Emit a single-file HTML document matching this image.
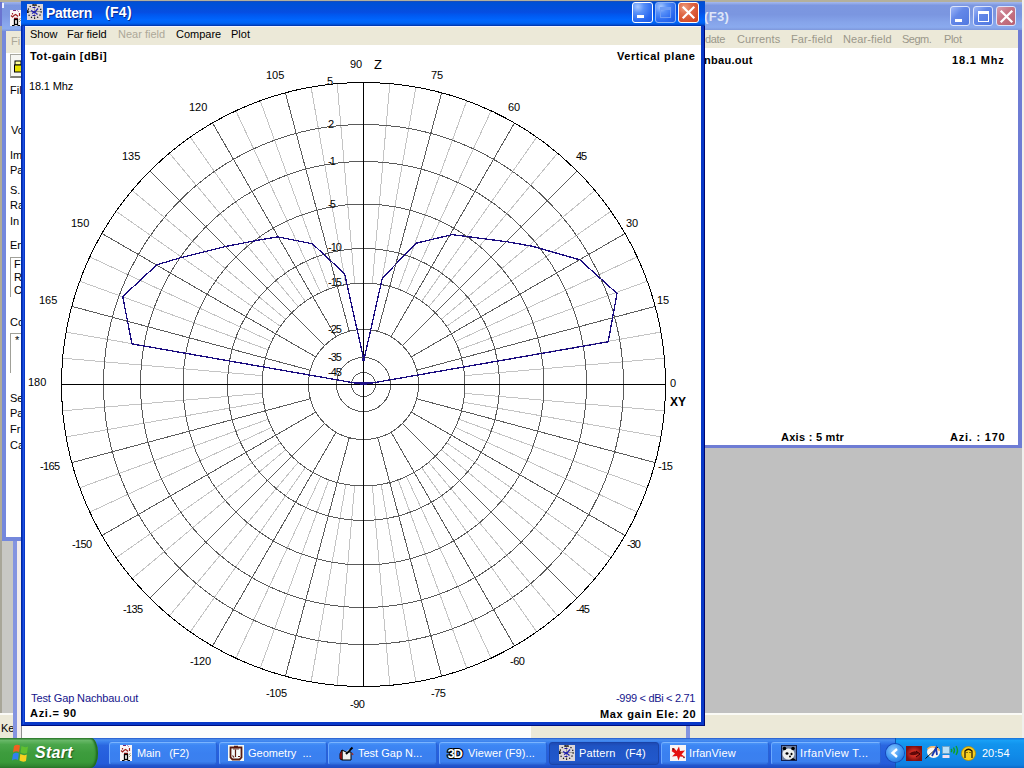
<!DOCTYPE html>
<html><head><meta charset="utf-8">
<style>
*{margin:0;padding:0;box-sizing:border-box}
html,body{width:1024px;height:768px;overflow:hidden;background:#c0c0c0;font-family:"Liberation Sans",sans-serif;position:relative}
.a{position:absolute}
.t{position:absolute;white-space:pre;font-family:"Liberation Sans",sans-serif;-webkit-font-smoothing:antialiased}
svg{position:absolute;overflow:visible}
</style></head><body>
<div class="a" style="left:0;top:0;width:1024px;height:2px;background:#b4b09c"></div>
<div class="a" style="left:0;top:26px;width:2px;height:514px;background:#b0ac98"></div>
<div class="a" style="left:0;top:2px;width:2px;height:24px;background:#6a74d0"></div><div class="a" style="left:2px;top:3px;width:2px;height:4px;background:#f4f8ff"></div>
<div class="a" style="left:0;top:540px;width:2px;height:175px;background:#a8a698"></div>
<div class="a" style="left:2px;top:541px;width:11px;height:172px;background:#c8c8c4"></div>
<div class="a" style="left:0;top:713px;width:1024px;height:2px;background:#fafaf6"></div>
<div class="a" style="left:0;top:715px;width:1024px;height:23px;background:#ece9d8"></div>
<div class="a" style="left:1022px;top:0;width:2px;height:738px;background:#f0f0ec"></div>
<div class="t" style="left:1px;top:723px;font-size:11px;line-height:11px;color:#000">Ke</div>
<div class="a" style="left:13px;top:541px;width:4px;height:197px;background:#8494e0"></div>
<div class="a" style="left:17px;top:541px;width:5px;height:197px;background:#f2ecec"></div>
<div class="a" style="left:21px;top:726px;width:1px;height:12px;background:#909090"></div>
<div class="a" style="left:22px;top:726px;width:509px;height:12px;background:#fcfcfc"></div>
<div class="a" style="left:686px;top:726px;width:4px;height:12px;background:#8494e0"></div>
<div class="a" style="left:2px;top:2px;width:20px;height:539px;background:#7488dc"></div>
<div class="a" style="left:2px;top:2px;width:20px;height:29px;background:linear-gradient(180deg,#a0b4ec 0,#7b96df 12%,#7d98e2 45%,#88a6ec 75%,#8cacee 92%,#7a94dc 100%)"></div>
<div class="a" style="left:6px;top:31px;width:16px;height:22px;background:#ece9d8"></div>
<div class="a" style="left:6px;top:53px;width:16px;height:484px;background:#fff"></div>
<div class="a" style="left:10px;top:54px;width:12px;height:24px;border:1px solid #a8a8a0;border-right:none;border-bottom:2px solid #808078;background:#f6f6f2"></div>
<svg class="a" style="left:14px;top:60px" width="8" height="13"><rect x="1" y="1" width="6" height="4" fill="#ffff9a" stroke="#000"/><rect x="0.5" y="5" width="7" height="7" fill="#e8e000" stroke="#000"/></svg>
<div class="a" style="left:8px;top:10px"><svg width="16" height="16" viewBox="0 0 16 16"><rect x="2" y="0" width="12" height="16" fill="#fbf6f6"/>
<path d="M5 0.5H8M9.5 0.5L10.5 1.5" stroke="#7a2a7a" stroke-width="1"/>
<path d="M4.5 3V4.5M11.5 3V6M3 5.5L4.5 7L6 5.5L7.5 4.5L9 5.5L10 6.5" stroke="#a02020" stroke-width="1.2" fill="none"/>
<path d="M6 8.5H10" stroke="#8a1010" stroke-width="1.5"/><rect x="6.5" y="9.5" width="3" height="5" fill="none" stroke="#000" stroke-width="1.3"/>
<path d="M4 15.5H6.5M9.5 15.5H12" stroke="#000" stroke-width="1"/><path d="M11 10L12.5 8M11 12L13 10" stroke="#8a8a60" stroke-width="0.8"/></svg></div>
<div class="a" style="left:10px;top:257px;width:12px;height:40px;border-left:1px solid #a0a098;border-top:1px solid #a0a098"></div>
<div class="a" style="left:10px;top:333px;width:12px;height:40px;border-left:1px solid #a0a098;border-top:1px solid #a0a098"></div>
<div class="t" style="left:11px;top:36px;font-size:11px;line-height:11px;color:#aca899">Fi</div>
<div class="t" style="left:10px;top:85px;font-size:11px;line-height:11px;color:#000">Fil</div>
<div class="t" style="left:11px;top:125px;font-size:11px;line-height:11px;color:#000">Vo</div>
<div class="t" style="left:10px;top:150px;font-size:11px;line-height:11px;color:#000">Im</div>
<div class="t" style="left:10px;top:165px;font-size:11px;line-height:11px;color:#000">Pa</div>
<div class="t" style="left:10px;top:185px;font-size:11px;line-height:11px;color:#000">S.1</div>
<div class="t" style="left:10px;top:200px;font-size:11px;line-height:11px;color:#000">Ra</div>
<div class="t" style="left:10px;top:216px;font-size:11px;line-height:11px;color:#000">In</div>
<div class="t" style="left:10px;top:240px;font-size:11px;line-height:11px;color:#000">En</div>
<div class="t" style="left:10px;top:317px;font-size:11px;line-height:11px;color:#000">Co</div>
<div class="t" style="left:10px;top:393px;font-size:11px;line-height:11px;color:#000">Se</div>
<div class="t" style="left:10px;top:408px;font-size:11px;line-height:11px;color:#000">Pa</div>
<div class="t" style="left:10px;top:424px;font-size:11px;line-height:11px;color:#000">Fr</div>
<div class="t" style="left:10px;top:440px;font-size:11px;line-height:11px;color:#000">Ca</div>
<div class="t" style="left:14px;top:259px;font-size:11px;line-height:11px;color:#000">F</div>
<div class="t" style="left:14px;top:272px;font-size:11px;line-height:11px;color:#000">R</div>
<div class="t" style="left:14px;top:285px;font-size:11px;line-height:11px;color:#000">C</div>
<div class="t" style="left:15px;top:335px;font-size:11px;line-height:11px;color:#000">*</div>
<div class="a" style="left:2px;top:3px;width:2px;height:5px;background:#eef2ff"></div>
<div class="a" style="left:700px;top:2px;width:322px;height:446px;background:#6e7cd4"></div>
<div class="a" style="left:700px;top:2px;width:322px;height:28px;background:linear-gradient(180deg,#a6baee 0,#7c97e0 12%,#7b96e0 45%,#86a4ea 72%,#8aaaee 90%,#7e98dc 100%)"></div>
<div class="a" style="left:700px;top:30px;width:318px;height:18px;background:#ece9d8"></div>
<div class="a" style="left:700px;top:48px;width:318px;height:397px;background:#fff"></div>
<div class="a" style="left:950px;top:6px;width:20px;height:20px;border:1px solid #dce4fa;border-radius:3px;background:linear-gradient(135deg,#a0b8f8 0,#6488e8 40%,#5078e0 100%)"></div><div class="a" style="left:955px;top:19px;width:7px;height:3px;background:#fff"></div>
<div class="a" style="left:973px;top:6px;width:20px;height:20px;border:1px solid #dce4fa;border-radius:3px;background:linear-gradient(135deg,#a0b8f8 0,#6488e8 40%,#5078e0 100%)"></div><div class="a" style="left:978px;top:11px;width:11px;height:11px;border:1px solid #fff;border-top-width:3px"></div>
<div class="a" style="left:996px;top:6px;width:20px;height:20px;border:1px solid #dce4fa;border-radius:3px;background:linear-gradient(135deg,#d8a0b0 0,#c87888 40%,#b86070 100%)"></div><svg class="a" style="left:996px;top:6px" width="20" height="20"><path d="M5.5 5.5 L15.5 15.5 M15.5 5.5 L5.5 15.5" stroke="#fff" stroke-width="2.2" stroke-linecap="square"/></svg>
<div class="t" style="left:704px;top:10px;font-size:13px;line-height:13px;color:#dfe6f8;font-weight:bold;letter-spacing:0.33px">(F3)</div>
<div class="t" style="left:705px;top:34px;font-size:11px;line-height:11px;color:#9a978a;letter-spacing:-0.33px">date</div>
<div class="t" style="left:737px;top:34px;font-size:11px;line-height:11px;color:#9a978a;letter-spacing:0.14px">Currents</div>
<div class="t" style="left:791px;top:34px;font-size:11px;line-height:11px;color:#9a978a;letter-spacing:0.12px">Far-field</div>
<div class="t" style="left:843px;top:34px;font-size:11px;line-height:11px;color:#9a978a;letter-spacing:0.11px">Near-field</div>
<div class="t" style="left:902px;top:34px;font-size:11px;line-height:11px;color:#9a978a;letter-spacing:-0.5px">Segm.</div>
<div class="t" style="left:944px;top:34px;font-size:11px;line-height:11px;color:#9a978a;letter-spacing:-0.33px">Plot</div>
<div class="t" style="left:704px;top:55px;font-size:11px;line-height:11px;color:#000;font-weight:bold;letter-spacing:0.29px">nbau.out</div>
<div class="t" style="left:952px;top:55px;font-size:11px;line-height:11px;color:#000;font-weight:bold;letter-spacing:0.86px">18.1 Mhz</div>
<div class="t" style="left:781px;top:432px;font-size:11px;line-height:11px;color:#000;font-weight:bold;letter-spacing:0.27px">Axis : 5 mtr</div>
<div class="t" style="left:950px;top:432px;font-size:11px;line-height:11px;color:#000;font-weight:bold;letter-spacing:0.78px">Azi. : 170</div>
<div class="a" style="left:21px;top:1px;width:684px;height:725px;background:#0838c8;border-left:1px solid #0028a0;border-right:1px solid #000870;border-bottom:1px solid #001080"></div><div class="a" style="left:23px;top:26px;width:1px;height:698px;background:#2050e0"></div>
<div class="a" style="left:21px;top:1px;width:684px;height:25px;background:linear-gradient(180deg,#2a4ca8 0,#0050d4 5%,#0050d8 16%,#064ee2 45%,#0058f0 56%,#0066fe 76%,#0064f4 88%,#0050d8 94%,#0030a0 100%)"></div>
<div class="a" style="left:25px;top:26px;width:676px;height:1px;background:#f4f4ff"></div>
<div class="a" style="left:25px;top:27px;width:676px;height:18px;background:#ece9d8"></div>
<div class="a" style="left:25px;top:45px;width:676px;height:677px;background:#fff"></div>
<div class="a" style="left:27px;top:4px"><svg width="16" height="16" viewBox="0 0 16 16"><rect width="16" height="16" fill="#dcd6d8"/>
<path d="M1 7.5H15M7.5 1V15" stroke="#8a8a80" stroke-width="0.8"/>
<circle cx="7.5" cy="7.5" r="6.6" fill="none" stroke="#000" stroke-width="1.2" stroke-dasharray="1.2 2"/>
<path d="M5.5 1H9.5" stroke="#000" stroke-width="1.2"/><path d="M0.8 6V9" stroke="#000" stroke-width="1.2"/>
<path d="M5.5 3.5H8.5M5.5 11.5H8.5" stroke="#2018a0" stroke-width="1.2"/>
<path d="M4 6.5L7.5 8.5L11 4.5M5 9.5L7.5 8L10.5 10.5" stroke="#2020b0" stroke-width="1.3" fill="none"/></svg></div>
<div class="a" style="left:632px;top:2px;width:21px;height:21px;border:1px solid #fff;border-radius:3px;background:radial-gradient(circle at 25% 20%, #a8c8ff 0, #5890f8 30%, #2868f0 70%, #1e58e0 100%)"></div><div class="a" style="left:637px;top:15px;width:7px;height:3px;background:#fff"></div>
<div class="a" style="left:655px;top:2px;width:21px;height:21px;border:1px solid #8cb4f8;border-radius:3px;background:radial-gradient(circle at 25% 20%, #a8c8ff 0, #5890f8 30%, #2868f0 70%, #1e58e0 100%)"></div><div class="a" style="left:660px;top:7px;width:11px;height:11px;border:1px solid #6e9cf6;border-top-width:3px"></div>
<div class="a" style="left:678px;top:2px;width:21px;height:21px;border:1px solid #fff;border-radius:3px;background:radial-gradient(circle at 30% 25%, #f0a080 0, #e06a48 35%, #d44a26 80%, #c83c18 100%)"></div><svg class="a" style="left:678px;top:2px" width="21" height="21"><path d="M5.5 5.5 L15.5 15.5 M15.5 5.5 L5.5 15.5" stroke="#fff" stroke-width="2.2" stroke-linecap="square"/></svg>
<svg class="a" style="left:0;top:0" width="1024" height="768" shape-rendering="crispEdges"><line x1="464.61" y1="375.65" x2="664.35" y2="358.18" stroke="#c4c4c4"/>
<line x1="463.46" y1="366.87" x2="660.91" y2="332.06" stroke="#c4c4c4"/>
<line x1="458.88" y1="349.78" x2="647.29" y2="281.21" stroke="#c4c4c4"/>
<line x1="455.49" y1="341.60" x2="637.20" y2="256.87" stroke="#c4c4c4"/>
<line x1="446.64" y1="326.28" x2="610.88" y2="211.28" stroke="#c4c4c4"/>
<line x1="441.25" y1="319.26" x2="594.85" y2="190.38" stroke="#c4c4c4"/>
<line x1="428.74" y1="306.75" x2="557.62" y2="153.15" stroke="#c4c4c4"/>
<line x1="421.72" y1="301.36" x2="536.72" y2="137.12" stroke="#c4c4c4"/>
<line x1="406.40" y1="292.51" x2="491.13" y2="110.80" stroke="#c4c4c4"/>
<line x1="398.22" y1="289.12" x2="466.79" y2="100.71" stroke="#c4c4c4"/>
<line x1="381.13" y1="284.54" x2="415.94" y2="87.09" stroke="#c4c4c4"/>
<line x1="372.35" y1="283.39" x2="389.82" y2="83.65" stroke="#c4c4c4"/>
<line x1="354.65" y1="283.39" x2="337.18" y2="83.65" stroke="#c4c4c4"/>
<line x1="345.87" y1="284.54" x2="311.06" y2="87.09" stroke="#c4c4c4"/>
<line x1="328.78" y1="289.12" x2="260.21" y2="100.71" stroke="#c4c4c4"/>
<line x1="320.60" y1="292.51" x2="235.87" y2="110.80" stroke="#c4c4c4"/>
<line x1="305.28" y1="301.36" x2="190.28" y2="137.12" stroke="#c4c4c4"/>
<line x1="298.26" y1="306.75" x2="169.38" y2="153.15" stroke="#c4c4c4"/>
<line x1="285.75" y1="319.26" x2="132.15" y2="190.38" stroke="#c4c4c4"/>
<line x1="280.36" y1="326.28" x2="116.12" y2="211.28" stroke="#c4c4c4"/>
<line x1="271.51" y1="341.60" x2="89.80" y2="256.87" stroke="#c4c4c4"/>
<line x1="268.12" y1="349.78" x2="79.71" y2="281.21" stroke="#c4c4c4"/>
<line x1="263.54" y1="366.87" x2="66.09" y2="332.06" stroke="#c4c4c4"/>
<line x1="262.39" y1="375.65" x2="62.65" y2="358.18" stroke="#c4c4c4"/>
<line x1="262.39" y1="393.35" x2="62.65" y2="410.82" stroke="#c4c4c4"/>
<line x1="263.54" y1="402.13" x2="66.09" y2="436.94" stroke="#c4c4c4"/>
<line x1="268.12" y1="419.22" x2="79.71" y2="487.79" stroke="#c4c4c4"/>
<line x1="271.51" y1="427.40" x2="89.80" y2="512.13" stroke="#c4c4c4"/>
<line x1="280.36" y1="442.72" x2="116.12" y2="557.72" stroke="#c4c4c4"/>
<line x1="285.75" y1="449.74" x2="132.15" y2="578.62" stroke="#c4c4c4"/>
<line x1="298.26" y1="462.25" x2="169.38" y2="615.85" stroke="#c4c4c4"/>
<line x1="305.28" y1="467.64" x2="190.28" y2="631.88" stroke="#c4c4c4"/>
<line x1="320.60" y1="476.49" x2="235.87" y2="658.20" stroke="#c4c4c4"/>
<line x1="328.78" y1="479.88" x2="260.21" y2="668.29" stroke="#c4c4c4"/>
<line x1="345.87" y1="484.46" x2="311.06" y2="681.91" stroke="#c4c4c4"/>
<line x1="354.65" y1="485.61" x2="337.18" y2="685.35" stroke="#c4c4c4"/>
<line x1="372.35" y1="485.61" x2="389.82" y2="685.35" stroke="#c4c4c4"/>
<line x1="381.13" y1="484.46" x2="415.94" y2="681.91" stroke="#c4c4c4"/>
<line x1="398.22" y1="479.88" x2="466.79" y2="668.29" stroke="#c4c4c4"/>
<line x1="406.40" y1="476.49" x2="491.13" y2="658.20" stroke="#c4c4c4"/>
<line x1="421.72" y1="467.64" x2="536.72" y2="631.88" stroke="#c4c4c4"/>
<line x1="428.74" y1="462.25" x2="557.62" y2="615.85" stroke="#c4c4c4"/>
<line x1="441.25" y1="449.74" x2="594.85" y2="578.62" stroke="#c4c4c4"/>
<line x1="446.64" y1="442.72" x2="610.88" y2="557.72" stroke="#c4c4c4"/>
<line x1="455.49" y1="427.40" x2="637.20" y2="512.13" stroke="#c4c4c4"/>
<line x1="458.88" y1="419.22" x2="647.29" y2="487.79" stroke="#c4c4c4"/>
<line x1="463.46" y1="402.13" x2="660.91" y2="436.94" stroke="#c4c4c4"/>
<line x1="464.61" y1="393.35" x2="664.35" y2="410.82" stroke="#c4c4c4"/>
<line x1="416.63" y1="370.26" x2="655.21" y2="306.34" stroke="#5c5c5c"/>
<line x1="411.13" y1="357.00" x2="625.04" y2="233.50" stroke="#5c5c5c"/>
<line x1="402.39" y1="345.61" x2="577.05" y2="170.95" stroke="#5c5c5c"/>
<line x1="391.00" y1="336.87" x2="514.50" y2="122.96" stroke="#5c5c5c"/>
<line x1="377.74" y1="331.37" x2="441.66" y2="92.79" stroke="#5c5c5c"/>
<line x1="349.26" y1="331.37" x2="285.34" y2="92.79" stroke="#5c5c5c"/>
<line x1="336.00" y1="336.87" x2="212.50" y2="122.96" stroke="#5c5c5c"/>
<line x1="324.61" y1="345.61" x2="149.95" y2="170.95" stroke="#5c5c5c"/>
<line x1="315.87" y1="357.00" x2="101.96" y2="233.50" stroke="#5c5c5c"/>
<line x1="310.37" y1="370.26" x2="71.79" y2="306.34" stroke="#5c5c5c"/>
<line x1="310.37" y1="398.74" x2="71.79" y2="462.66" stroke="#5c5c5c"/>
<line x1="315.87" y1="412.00" x2="101.96" y2="535.50" stroke="#5c5c5c"/>
<line x1="324.61" y1="423.39" x2="149.95" y2="598.05" stroke="#5c5c5c"/>
<line x1="336.00" y1="432.13" x2="212.50" y2="646.04" stroke="#5c5c5c"/>
<line x1="349.26" y1="437.63" x2="285.34" y2="676.21" stroke="#5c5c5c"/>
<line x1="377.74" y1="437.63" x2="441.66" y2="676.21" stroke="#5c5c5c"/>
<line x1="391.00" y1="432.13" x2="514.50" y2="646.04" stroke="#5c5c5c"/>
<line x1="402.39" y1="423.39" x2="577.05" y2="598.05" stroke="#5c5c5c"/>
<line x1="411.13" y1="412.00" x2="625.04" y2="535.50" stroke="#5c5c5c"/>
<line x1="416.63" y1="398.74" x2="655.21" y2="462.66" stroke="#5c5c5c"/>
<circle cx="363.5" cy="384.5" r="12" fill="none" stroke="#5a5a5a"/>
<circle cx="363.5" cy="384.5" r="27" fill="none" stroke="#5a5a5a"/>
<circle cx="363.5" cy="384.5" r="55" fill="none" stroke="#5a5a5a"/>
<circle cx="363.5" cy="384.5" r="101.5" fill="none" stroke="#5a5a5a"/>
<circle cx="363.5" cy="384.5" r="136" fill="none" stroke="#5a5a5a"/>
<circle cx="363.5" cy="384.5" r="180.5" fill="none" stroke="#5a5a5a"/>
<circle cx="363.5" cy="384.5" r="223" fill="none" stroke="#5a5a5a"/>
<circle cx="363.5" cy="384.5" r="260" fill="none" stroke="#5a5a5a"/>
<circle cx="363.5" cy="384.5" r="302" fill="none" stroke="#000"/>
<line x1="61.5" y1="384.5" x2="665.5" y2="384.5" stroke="#000"/>
<line x1="363.5" y1="82.5" x2="363.5" y2="686.5" stroke="#000"/>
<polyline points="363.5,384.5 608.2,341.8 617.0,293.5 579.8,259.8 532.5,246.3 507.9,241.9 452.1,234.6 416.2,243.2 382.3,278.1 363.9,360.0 363.9,360.1 344.6,273.7 312.4,243.8 277.9,236.9 258.9,240.0 225.6,246.5 180.5,257.7 156.8,264.8 122.7,296.6 132.0,343.9 363.5,384.5" fill="none" stroke="#1a0c80" stroke-width="1.3" stroke-linejoin="miter"/>
<rect x="362" y="358" width="3" height="3" fill="#1e0f87"/>
<rect x="354" y="382" width="19" height="2" fill="#1e0f87"/></svg>
<div class="t" style="left:46px;top:6px;font-size:14px;line-height:14px;color:#fff;font-weight:bold;letter-spacing:-0.33px;text-shadow:1px 1px 0 #0a2a90">Pattern</div>
<div class="t" style="left:105px;top:5px;font-size:14px;line-height:14px;color:#fff;font-weight:bold;letter-spacing:0.33px;text-shadow:1px 1px 0 #0a2a90">(F4)</div>
<div class="t" style="left:30px;top:29px;font-size:11px;line-height:11px;color:#000">Show</div>
<div class="t" style="left:67px;top:29px;font-size:11px;line-height:11px;color:#000">Far field</div>
<div class="t" style="left:118px;top:29px;font-size:11px;line-height:11px;color:#aca899">Near field</div>
<div class="t" style="left:176px;top:29px;font-size:11px;line-height:11px;color:#000">Compare</div>
<div class="t" style="left:231px;top:29px;font-size:11px;line-height:11px;color:#000">Plot</div>
<div class="t" style="left:30px;top:51px;font-size:11px;line-height:11px;color:#000;font-weight:bold;letter-spacing:0.46px">Tot-gain [dBi]</div>
<div class="t" style="left:29px;top:81px;font-size:11px;line-height:11px;color:#000;letter-spacing:-0.14px">18.1 Mhz</div>
<div class="t" style="left:617px;top:51px;font-size:11px;line-height:11px;color:#000;font-weight:bold;letter-spacing:0.54px">Vertical plane</div>
<div class="t" style="left:31px;top:693px;font-size:11px;line-height:11px;color:#14148c;letter-spacing:-0.11px">Test Gap Nachbau.out</div>
<div class="t" style="left:30px;top:708px;font-size:11px;line-height:11px;color:#000;font-weight:bold;letter-spacing:0.71px">Azi.= 90</div>
<div class="t" style="left:616px;top:693px;font-size:11px;line-height:11px;color:#14148c;letter-spacing:-0.31px">-999 &lt; dBi &lt; 2.71</div>
<div class="t" style="left:600px;top:709px;font-size:11px;line-height:11px;color:#000;font-weight:bold;letter-spacing:0.67px">Max gain Ele: 20</div>
<div class="t" style="left:374px;top:58px;font-size:13px;line-height:13px;color:#000">Z</div>
<div class="t" style="left:670px;top:396px;font-size:12px;line-height:12px;color:#000;font-weight:bold">XY</div>
<div class="t" style="left:350px;top:59px;font-size:11px;line-height:11px;color:#000">90</div>
<div class="t" style="left:266px;top:70px;font-size:11px;line-height:11px;color:#000">105</div>
<div class="t" style="left:431px;top:70px;font-size:11px;line-height:11px;color:#000">75</div>
<div class="t" style="left:189px;top:102px;font-size:11px;line-height:11px;color:#000">120</div>
<div class="t" style="left:508px;top:102px;font-size:11px;line-height:11px;color:#000">60</div>
<div class="t" style="left:122px;top:151px;font-size:11px;line-height:11px;color:#000">135</div>
<div class="t" style="left:576px;top:151px;font-size:11px;line-height:11px;color:#000;letter-spacing:-1.0px">45</div>
<div class="t" style="left:71px;top:218px;font-size:11px;line-height:11px;color:#000">150</div>
<div class="t" style="left:626px;top:218px;font-size:11px;line-height:11px;color:#000">30</div>
<div class="t" style="left:39px;top:295px;font-size:11px;line-height:11px;color:#000">165</div>
<div class="t" style="left:657px;top:295px;font-size:11px;line-height:11px;color:#000">15</div>
<div class="t" style="left:28px;top:377px;font-size:11px;line-height:11px;color:#000">180</div>
<div class="t" style="left:670px;top:378px;font-size:11px;line-height:11px;color:#000">0</div>
<div class="t" style="left:40px;top:461px;font-size:11px;line-height:11px;color:#000;letter-spacing:-0.67px">-165</div>
<div class="t" style="left:658px;top:461px;font-size:11px;line-height:11px;color:#000;letter-spacing:-0.5px">-15</div>
<div class="t" style="left:72px;top:539px;font-size:11px;line-height:11px;color:#000;letter-spacing:-0.67px">-150</div>
<div class="t" style="left:627px;top:539px;font-size:11px;line-height:11px;color:#000;letter-spacing:-1.0px">-30</div>
<div class="t" style="left:123px;top:604px;font-size:11px;line-height:11px;color:#000;letter-spacing:-0.67px">-135</div>
<div class="t" style="left:576px;top:604px;font-size:11px;line-height:11px;color:#000;letter-spacing:-1.0px">-45</div>
<div class="t" style="left:190px;top:656px;font-size:11px;line-height:11px;color:#000;letter-spacing:-0.33px">-120</div>
<div class="t" style="left:510px;top:656px;font-size:11px;line-height:11px;color:#000;letter-spacing:-0.5px">-60</div>
<div class="t" style="left:266px;top:688px;font-size:11px;line-height:11px;color:#000;letter-spacing:-0.33px">-105</div>
<div class="t" style="left:431px;top:688px;font-size:11px;line-height:11px;color:#000;letter-spacing:-0.5px">-75</div>
<div class="t" style="left:350px;top:699px;font-size:11px;line-height:11px;color:#000;letter-spacing:-0.5px">-90</div>
<div class="t" style="left:327px;top:76px;font-size:11px;line-height:11px;color:#000">5</div>
<div class="t" style="left:328px;top:119px;font-size:11px;line-height:11px;color:#000">2</div>
<div class="t" style="left:328px;top:156px;font-size:11px;line-height:11px;color:#000;letter-spacing:-2.0px">-1</div>
<div class="t" style="left:328px;top:199px;font-size:11px;line-height:11px;color:#000;letter-spacing:-2.0px">-5</div>
<div class="t" style="left:328px;top:242px;font-size:11px;line-height:11px;color:#000;letter-spacing:-1.0px">-10</div>
<div class="t" style="left:328px;top:277px;font-size:11px;line-height:11px;color:#000;letter-spacing:-1.0px">-15</div>
<div class="t" style="left:328px;top:324px;font-size:11px;line-height:11px;color:#000;letter-spacing:-1.0px">-25</div>
<div class="t" style="left:328px;top:352px;font-size:11px;line-height:11px;color:#000;letter-spacing:-1.0px">-35</div>
<div class="t" style="left:328px;top:367px;font-size:11px;line-height:11px;color:#000;letter-spacing:-1.0px">-45</div>
<div class="a" style="left:0;top:738px;width:1024px;height:30px;background:linear-gradient(180deg,#2456c8 0,#4a90f0 6%,#3c82ee 12%,#2a66e0 25%,#2660de 50%,#245cda 85%,#1e4cc0 100%)"></div>
<div class="a" style="left:895px;top:738px;width:129px;height:30px;background:linear-gradient(180deg,#1a70d8 0,#18a0f6 8%,#1294ee 20%,#108ae8 60%,#1080e0 90%,#0c68c8 100%);border-left:1px solid #0c58b0"></div>
<div class="a" style="left:0;top:738px;width:98px;height:30px;border-radius:0 7px 7px 0/0 15px 15px 0;background:linear-gradient(180deg,#2e7a2e 0,#68b868 8%,#4aa64a 22%,#3d9c3d 50%,#399a39 80%,#2c7c2c 100%);box-shadow:inset -2px 0 2px #1f6a1f"></div>
<svg class="a" style="left:11px;top:744px" width="20" height="19" viewBox="0 0 20 19">
<path d="M3 2Q6 0 9 1.5L8 8Q5 6.5 2 8.5Z" fill="#f06020"/><path d="M10.5 2Q14 4 17 2.5L16 9Q13 10.5 9.5 8.5Z" fill="#60c030"/>
<path d="M2 10Q5 8 7.8 9.5L7 16Q4 14.5 1 16.5Z" fill="#3080f0"/><path d="M9.3 10Q13 12 15.8 10.5L15 17Q12 18.5 8.5 16.5Z" fill="#f8d020"/></svg>
<div class="a" style="left:109px;top:742px;width:108px;height:23px;border-radius:3px;border:1px solid #2a62d4;border-top-color:#7ab4ff;border-left-color:#6aa8ff;background:linear-gradient(180deg,#4a94f8 0,#3d86f4 12%,#3a80f0 50%,#3b80ef 88%,#2f6ddd 100%)"></div>
<div class="a" style="left:219px;top:742px;width:108px;height:23px;border-radius:3px;border:1px solid #2a62d4;border-top-color:#7ab4ff;border-left-color:#6aa8ff;background:linear-gradient(180deg,#4a94f8 0,#3d86f4 12%,#3a80f0 50%,#3b80ef 88%,#2f6ddd 100%)"></div>
<div class="a" style="left:328px;top:742px;width:109px;height:23px;border-radius:3px;border:1px solid #2a62d4;border-top-color:#7ab4ff;border-left-color:#6aa8ff;background:linear-gradient(180deg,#4a94f8 0,#3d86f4 12%,#3a80f0 50%,#3b80ef 88%,#2f6ddd 100%)"></div>
<div class="a" style="left:439px;top:742px;width:108px;height:23px;border-radius:3px;border:1px solid #2a62d4;border-top-color:#7ab4ff;border-left-color:#6aa8ff;background:linear-gradient(180deg,#4a94f8 0,#3d86f4 12%,#3a80f0 50%,#3b80ef 88%,#2f6ddd 100%)"></div>
<div class="a" style="left:549px;top:742px;width:110px;height:23px;border-radius:3px;border:1px solid #1a44a8;background:linear-gradient(180deg,#1e4ab4 0,#1f54c4 15%,#2158cc 85%,#1d4eb8 100%)"></div>
<div class="a" style="left:661px;top:742px;width:108px;height:23px;border-radius:3px;border:1px solid #2a62d4;border-top-color:#7ab4ff;border-left-color:#6aa8ff;background:linear-gradient(180deg,#4a94f8 0,#3d86f4 12%,#3a80f0 50%,#3b80ef 88%,#2f6ddd 100%)"></div>
<div class="a" style="left:771px;top:742px;width:110px;height:23px;border-radius:3px;border:1px solid #2a62d4;border-top-color:#7ab4ff;border-left-color:#6aa8ff;background:linear-gradient(180deg,#4a94f8 0,#3d86f4 12%,#3a80f0 50%,#3b80ef 88%,#2f6ddd 100%)"></div>
<div class="a" style="left:118px;top:745px"><svg width="16" height="16" viewBox="0 0 16 16"><rect x="2" y="0" width="12" height="16" fill="#fbf6f6"/>
<path d="M5 0.5H8M9.5 0.5L10.5 1.5" stroke="#7a2a7a" stroke-width="1"/>
<path d="M4.5 3V4.5M11.5 3V6M3 5.5L4.5 7L6 5.5L7.5 4.5L9 5.5L10 6.5" stroke="#a02020" stroke-width="1.2" fill="none"/>
<path d="M6 8.5H10" stroke="#8a1010" stroke-width="1.5"/><rect x="6.5" y="9.5" width="3" height="5" fill="none" stroke="#000" stroke-width="1.3"/>
<path d="M4 15.5H6.5M9.5 15.5H12" stroke="#000" stroke-width="1"/><path d="M11 10L12.5 8M11 12L13 10" stroke="#8a8a60" stroke-width="0.8"/></svg></div>
<div class="a" style="left:228px;top:745px"><svg width="16" height="16" viewBox="0 0 16 16"><rect width="16" height="16" fill="#f4fafa"/>
<path d="M2.5 2.5H13.5V12.5L11.5 14.5H4.5L2.5 12.5Z" fill="none" stroke="#5a1c10" stroke-width="1.8"/>
<path d="M6 1.5H10" stroke="#5a1c10" stroke-width="1.5"/><path d="M5 4H11" stroke="#5a1c10" stroke-width="0.8"/>
<path d="M7.5 4.5V12M4.5 10.5L6 12.5M10 11.5H12" stroke="#5a1c10" stroke-width="1.2"/></svg></div>
<div class="a" style="left:338px;top:745px"><svg width="16" height="16" viewBox="0 0 16 16">
<path d="M4 5L8 7H13V15H4Z" fill="#f0f0f0" stroke="#000" stroke-width="1"/>
<path d="M4 5Q1 8 2 14L4 15Z" fill="#e01818" stroke="#000" stroke-width="0.8"/>
<path d="M8 9L14.5 2.5" stroke="#000" stroke-width="2"/><path d="M8.5 7L11 4.5" stroke="#fff" stroke-width="0.8"/>
<path d="M14 8L15 10" stroke="#a03030" stroke-width="1.5"/></svg></div>
<div class="a" style="left:447px;top:745px"><svg width="17" height="16" viewBox="0 0 17 16"><text x="0.5" y="13" font-family="Liberation Sans" font-weight="bold" font-size="13" fill="#fff" stroke="#000" stroke-width="2.2" paint-order="stroke" letter-spacing="-1.2">3D</text></svg></div>
<div class="a" style="left:559px;top:745px"><svg width="16" height="16" viewBox="0 0 16 16"><rect width="16" height="16" fill="#dcd6d8"/>
<path d="M1 7.5H15M7.5 1V15" stroke="#8a8a80" stroke-width="0.8"/>
<circle cx="7.5" cy="7.5" r="6.6" fill="none" stroke="#000" stroke-width="1.2" stroke-dasharray="1.2 2"/>
<path d="M5.5 1H9.5" stroke="#000" stroke-width="1.2"/><path d="M0.8 6V9" stroke="#000" stroke-width="1.2"/>
<path d="M5.5 3.5H8.5M5.5 11.5H8.5" stroke="#2018a0" stroke-width="1.2"/>
<path d="M4 6.5L7.5 8.5L11 4.5M5 9.5L7.5 8L10.5 10.5" stroke="#2020b0" stroke-width="1.3" fill="none"/></svg></div>
<div class="a" style="left:670px;top:745px"><svg width="16" height="16" viewBox="0 0 16 16"><rect width="16" height="16" fill="#f8f4f4"/>
<path d="M4 3L6.5 6L9 1.5L10 6L15 5.5L11.5 9.5L15 12L10 11.5L8.5 15.5L7 11L2 11.5L5 8.5L1.5 6Z" fill="#e41010"/><circle cx="3" cy="4" r="1" fill="#600"/><circle cx="14" cy="12.5" r="0.8" fill="#600"/></svg></div>
<div class="a" style="left:781px;top:745px"><svg width="16" height="16" viewBox="0 0 16 16"><rect x="0.5" y="0.5" width="15" height="15" fill="#7080a0" stroke="#102050"/>
<ellipse cx="7.5" cy="9" rx="6" ry="5.5" fill="#eef0ee"/><circle cx="3.5" cy="3.5" r="1.8" fill="#000"/><circle cx="12" cy="3.5" r="1.8" fill="#000"/>
<ellipse cx="6" cy="8.5" rx="1.5" ry="1.3" fill="#000"/><ellipse cx="10.5" cy="9" rx="1" ry="1.3" fill="#000"/><circle cx="9" cy="11.5" r="1" fill="#000"/><path d="M12 13L15 15H9Z" fill="#000"/></svg></div>
<div class="a" style="left:886px;top:744px;width:18px;height:18px;border-radius:50%;background:radial-gradient(circle at 40% 35%,#8cc8ff 0,#3c94f0 55%,#1e64d0 100%);box-shadow:0 0 0 1px #1848b8"></div>
<svg class="a" style="left:886px;top:744px" width="18" height="18"><path d="M11 5L6.5 9L11 13" stroke="#fff" stroke-width="2.4" fill="none"/></svg>
<svg class="a" style="left:906px;top:746px" width="16" height="15"><rect width="16" height="15" fill="#b01818"/><path d="M0 0H16V15H0Z" fill="url(#rg)"/><defs><radialGradient id="rg"><stop offset="0" stop-color="#ff4030"/><stop offset="1" stop-color="#801010"/></radialGradient></defs><path d="M3 8Q8 3 13 7Q8 11 3 8Z" fill="#600808"/><path d="M10 5L14 8L10 11" stroke="#300" stroke-width="1" fill="none"/></svg>
<svg class="a" style="left:925px;top:745px" width="16" height="14"><ellipse cx="8.5" cy="7" rx="6.5" ry="6" fill="#fff8f0"/><path d="M2.5 4A7 6 0 0 1 14.5 6" stroke="#f0b060" stroke-width="1.5" fill="none"/><path d="M0.5 13.5L13 2" stroke="#000" stroke-width="0.9"/><path d="M7 11L11 3L12 10" stroke="#1838b0" stroke-width="1.8" fill="none"/></svg>
<svg class="a" style="left:942px;top:745px" width="17" height="14"><rect x="0.5" y="1.5" width="7" height="7" fill="#b8e0f8" stroke="#70a0c0" stroke-width="0.8"/><rect x="0.5" y="10" width="7" height="3" fill="#f0e0f0"/><path d="M9 4Q10.5 5.5 9 7M11.5 2.5Q13.5 5.5 11.5 8.5M14 1Q17 5.5 14 10" stroke="#10a020" stroke-width="1.3" fill="none"/></svg>
<svg class="a" style="left:961px;top:746px" width="15" height="15"><circle cx="7.5" cy="7.5" r="7" fill="#f8d020" stroke="#b08800" stroke-width="0.8"/><path d="M4 12V5Q7.5 1.5 11 5V12" stroke="#201000" stroke-width="1.2" fill="none"/><circle cx="6" cy="6.5" r="0.6" fill="#000"/><circle cx="9" cy="6.5" r="0.6" fill="#000"/></svg>
<div class="t" style="left:137px;top:748px;font-size:11px;line-height:11px;color:#fff;letter-spacing:-0.1px">Main   (F2)</div>
<div class="t" style="left:248px;top:748px;font-size:11px;line-height:11px;color:#fff">Geometry  ...</div>
<div class="t" style="left:358px;top:748px;font-size:11px;line-height:11px;color:#fff">Test Gap N...</div>
<div class="t" style="left:468px;top:748px;font-size:11px;line-height:11px;color:#fff;letter-spacing:0.08px">Viewer (F9)...</div>
<div class="t" style="left:579px;top:748px;font-size:11px;line-height:11px;color:#fff;letter-spacing:0.15px">Pattern   (F4)</div>
<div class="t" style="left:689px;top:748px;font-size:11px;line-height:11px;color:#fff;letter-spacing:0.12px">IrfanView</div>
<div class="t" style="left:800px;top:748px;font-size:11px;line-height:11px;color:#fff;letter-spacing:0.38px">IrfanView T...</div>
<div class="t" style="left:982px;top:748px;font-size:11px;line-height:11px;color:#fff">20:54</div>
<div class="t" style="left:35px;top:745px;font-size:16px;line-height:16px;color:#fff;font-weight:bold;font-style:italic;letter-spacing:0.25px;text-shadow:1px 1px 1px #1e5a1e">Start</div>
</body></html>
